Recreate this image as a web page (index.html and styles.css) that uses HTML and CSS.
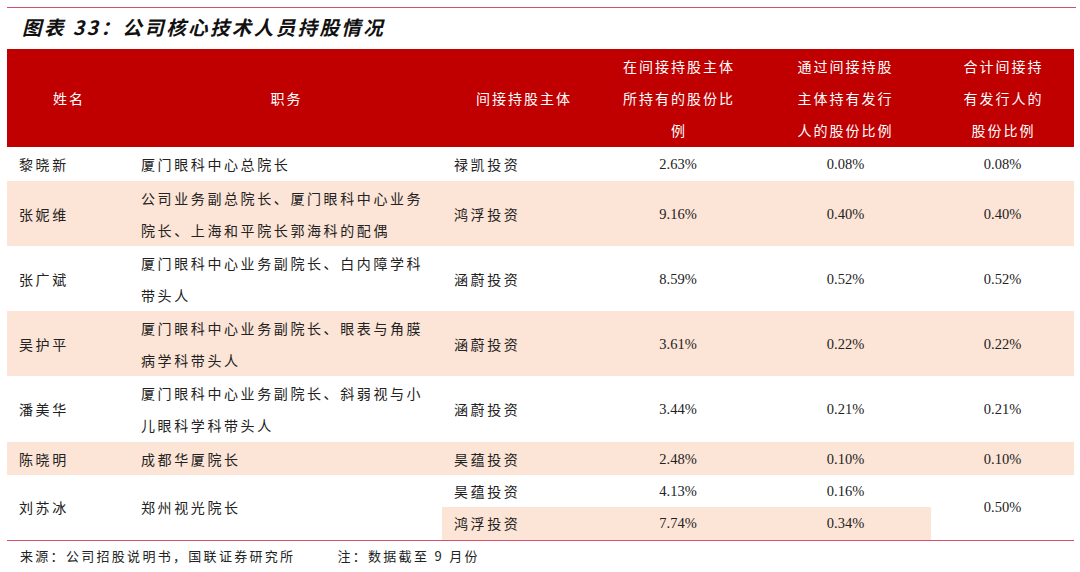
FILE: index.html
```html
<!DOCTYPE html>
<html lang="zh-CN">
<head>
<meta charset="utf-8">
<title>图表 33：公司核心技术人员持股情况</title>
<link rel="stylesheet" href="styles.css">
</head>
<body>
<div class="page">
  <div class="title-bar">
    <h1 class="title">图表 33：公司核心技术人员持股情况</h1>
  </div>
  <table class="grid">
    <colgroup>
      <col class="c1"><col class="c2"><col class="c3"><col class="c4"><col class="c5"><col class="c6">
    </colgroup>
    <thead>
      <tr class="head">
        <th>姓名</th>
        <th>职务</th>
        <th>间接持股主体</th>
        <th>在间接持股主体<br>所持有的股份比<br>例</th>
        <th class="sh">通过间接持股<br>主体持有发行<br>人的股份比例</th>
        <th>合计间接持<br>有发行人的<br>股份比例</th>
      </tr>
    </thead>
    <tbody>
      <tr class="r1">
        <td class="tx">黎晓新</td><td class="tx">厦门眼科中心总院长</td><td class="tx">禄凯投资</td>
        <td class="num">2.63%</td><td class="num sh">0.08%</td><td class="num">0.08%</td>
      </tr>
      <tr class="r2 pink">
        <td class="tx">张妮维</td><td class="tx">公司业务副总院长、厦门眼科中心业务<br>院长、上海和平院长郭海科的配偶</td><td class="tx">鸿浮投资</td>
        <td class="num">9.16%</td><td class="num sh">0.40%</td><td class="num">0.40%</td>
      </tr>
      <tr class="r2">
        <td class="tx">张广斌</td><td class="tx">厦门眼科中心业务副院长、白内障学科<br>带头人</td><td class="tx">涵蔚投资</td>
        <td class="num">8.59%</td><td class="num sh">0.52%</td><td class="num">0.52%</td>
      </tr>
      <tr class="r2 pink">
        <td class="tx">吴护平</td><td class="tx">厦门眼科中心业务副院长、眼表与角膜<br>病学科带头人</td><td class="tx">涵蔚投资</td>
        <td class="num">3.61%</td><td class="num sh">0.22%</td><td class="num">0.22%</td>
      </tr>
      <tr class="r2 r5">
        <td class="tx">潘美华</td><td class="tx">厦门眼科中心业务副院长、斜弱视与小<br>儿眼科学科带头人</td><td class="tx">涵蔚投资</td>
        <td class="num">3.44%</td><td class="num sh">0.21%</td><td class="num">0.21%</td>
      </tr>
      <tr class="r6 pink">
        <td class="tx">陈晓明</td><td class="tx">成都华厦院长</td><td class="tx">昊蕴投资</td>
        <td class="num">2.48%</td><td class="num sh">0.10%</td><td class="num">0.10%</td>
      </tr>
      <tr class="r7a">
        <td class="tx" rowspan="2">刘苏冰</td><td class="tx" rowspan="2">郑州视光院长</td><td class="tx">昊蕴投资</td>
        <td class="num">4.13%</td><td class="num sh">0.16%</td><td class="num" rowspan="2">0.50%</td>
      </tr>
      <tr class="r7b">
        <td class="tx pinkc">鸿浮投资</td><td class="num pinkc">7.74%</td><td class="num sh pinkc">0.34%</td>
      </tr>
    </tbody>
  </table>
  <div class="foot">
    <span class="src">来源：公司招股说明书，国联证券研究所</span>
    <span class="note">注：数据截至 9 月份</span>
  </div>
</div>
</body>
</html>
```

FILE: styles.css
```css
* { box-sizing: border-box; }
html, body { margin: 0; padding: 0; background: #fff; }
.page {
  width: 1080px;
  height: 572px;
  padding: 7px 0 0 7px;
  overflow: hidden;
}
.title-bar {
  width: 1069px;
  height: 42px;
  border-top: 1px solid #d4506a;
  display: flex;
  align-items: center;
  padding-left: 15px;
}
.title {
  margin: 0;
  font-family: "Noto Sans CJK SC", sans-serif;
  font-size: 19.5px;
  font-weight: 700;
  font-style: italic;
  letter-spacing: 2.4px;
  color: #111;
  line-height: 1;
  padding-bottom: 3px;
}
.grid {
  width: 1067px;
  border-collapse: collapse;
  table-layout: fixed;
  font-family: "Liberation Serif", "Noto Serif CJK SC", "Noto Sans CJK SC", serif;
  font-size: 14.5px;
  color: #222;
  border-bottom: 1px solid #d9506d;
}
.c1 { width: 122px; }
.c2 { width: 313px; }
.c3 { width: 162px; }
.c4 { width: 148px; }
.c5 { width: 179px; }
.c6 { width: 143px; }
.grid th, .grid td { padding: 0; vertical-align: middle; }
.head { height: 98px; background: #c00000; }
.head th {
  color: #fff;
  font-family: "Noto Sans CJK SC", sans-serif;
  font-weight: 400;
  font-size: 14px;
  line-height: 32px;
  letter-spacing: 2px;
  text-align: center;
  padding-left: 2px;
}
.head th.sh { padding-left: 8px; }
.r1 { height: 34px; }
.r2 { height: 65px; }
.r5 { height: 66px; }
.r6 { height: 33px; }
.r7a { height: 32px; }
.r7b { height: 33px; }
.pink td, td.pinkc { background: #fce4d6; }
td.tx {
  font-family: "Noto Sans CJK SC", sans-serif;
  font-size: 14px;
  letter-spacing: 2.6px;
  line-height: 32px;
  text-align: left;
  padding-left: 12px;
}
td.num {
  text-align: center;
  font-size: 14.5px;
  line-height: 30px;
}
td.num.sh { padding-left: 8px; }
.foot {
  height: 30px;
  display: flex;
  align-items: center;
  padding-left: 13px;
  font-family: "Noto Sans CJK SC", sans-serif;
  font-size: 13px;
  letter-spacing: 2.3px;
  color: #222;
}
.note { margin-left: 42px; }
```
